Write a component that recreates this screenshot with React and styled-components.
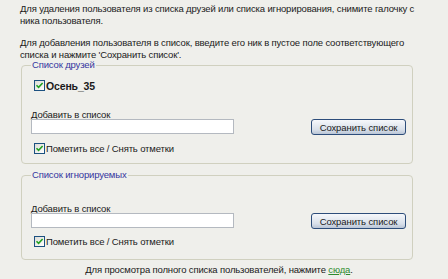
import styled, { createGlobalStyle } from "styled-components";

const GlobalStyle = createGlobalStyle`
  html, body {
    margin: 0;
    background: #efefeb;
  }
  body {
    font-family: "Liberation Sans", Arial, sans-serif;
    font-size: 9.5px;
    letter-spacing: -0.15px;
    color: #1a1a1a;
  }
`;

const Page = styled.div`
  width: 448px;
  box-sizing: border-box;
  padding: 3px 20px 0 20px;
`;

const Note = styled.p`
  margin: 0 0 ${({ $gap }) => $gap}px;
  line-height: 12px;
`;

const Group = styled.fieldset`
  margin: 0 15px ${({ $gap }) => $gap}px 1px;
  padding: 0 6px ${({ $bottom }) => $bottom}px 9px;
  border: 1px solid #d0d0bf;
  border-radius: 4px;
`;

const Legend = styled.legend`
  padding: 0 1px;
  color: #34359e;
  line-height: 12px;
`;

const CheckRow = styled.label`
  display: flex;
  align-items: center;
  gap: 1px;
  height: 13px;
  margin: ${({ $top }) => $top || 0}px 0 0 3px;
  font-weight: ${({ $bold }) => ($bold ? 700 : 400)};
  font-size: ${({ $bold }) => ($bold ? "10.5px" : "9.5px")};
`;

const Box = styled.span`
  display: inline-flex;
  align-items: center;
  justify-content: center;
  width: 11px;
  height: 11px;
  box-sizing: border-box;
  border: 1px solid #1c5180;
  background: linear-gradient(135deg, #dcdcd7, #ffffff);
`;

const FieldRow = styled.div`
  display: flex;
  justify-content: space-between;
  align-items: flex-end;
  margin: ${({ $top }) => $top}px 0 ${({ $bottom }) => $bottom}px;
`;

const Field = styled.div`
  display: flex;
  flex-direction: column;
`;

const FieldLabel = styled.span`
  line-height: 8px;
`;

const Input = styled.input`
  width: 203px;
  height: 15px;
  box-sizing: border-box;
  margin: 0 0 1px;
  border: 1px solid #b4b9c0;
  background: #fff;
`;

const Button = styled.button`
  width: 95px;
  height: 16px;
  box-sizing: border-box;
  padding: 0;
  border: 1px solid #2d4d7a;
  border-radius: 3px;
  background: linear-gradient(#f6f8fb, #d8dfe9 70%, #b9c5d6);
  font-family: inherit;
  font-size: 9.5px;
  letter-spacing: -0.1px;
  color: #1a1a1a;
`;

const Footer = styled.div`
  text-align: center;
  line-height: 12px;
  margin-right: 10px;
`;

const Link = styled.a`
  color: #2e8b2e;
  text-decoration: underline;
`;

const Check = () => (
  <Box>
    <svg width="9" height="9" viewBox="0 0 9 9">
      <path d="M1.5 4.2 L3.6 6.3 L7.6 2" fill="none" stroke="#21a121" strokeWidth="1.6" />
    </svg>
  </Box>
);

const ListGroup = ({ title, user, gap }) => (
  <Group $gap={gap} $bottom={user ? 8 : 11}>
    <Legend>{title}</Legend>
    {user && (
      <CheckRow $bold $top={8}>
        <Check />
        {user}
      </CheckRow>
    )}
    <FieldRow $top={user ? 19 : 24} $bottom={user ? 7 : 6}>
      <Field>
        <FieldLabel>Добавить в список</FieldLabel>
        <Input />
      </Field>
      <Button>Сохранить список</Button>
    </FieldRow>
    <CheckRow>
      <Check />
      Пометить все / Снять отметки
    </CheckRow>
  </Group>
);

export default function App() {
  return (
    <>
      <GlobalStyle />
      <Page>
        <Note $gap={10}>
          Для удаления пользователя из списка друзей или списка игнорирования, снимите галочку с
          ника пользователя.
        </Note>
        <Note $gap={-2}>
          Для добавления пользователя в список, введите его ник в пустое поле соответствующего
          списка и нажмите 'Сохранить список'.
        </Note>
        <ListGroup title="Список друзей" user="Осень_35" gap={5} />
        <ListGroup title="Список игнорируемых" gap={4} />
        <Footer>
          Для просмотра полного списка пользователей, нажмите <Link href="#">сюда</Link>.
        </Footer>
      </Page>
    </>
  );
}
